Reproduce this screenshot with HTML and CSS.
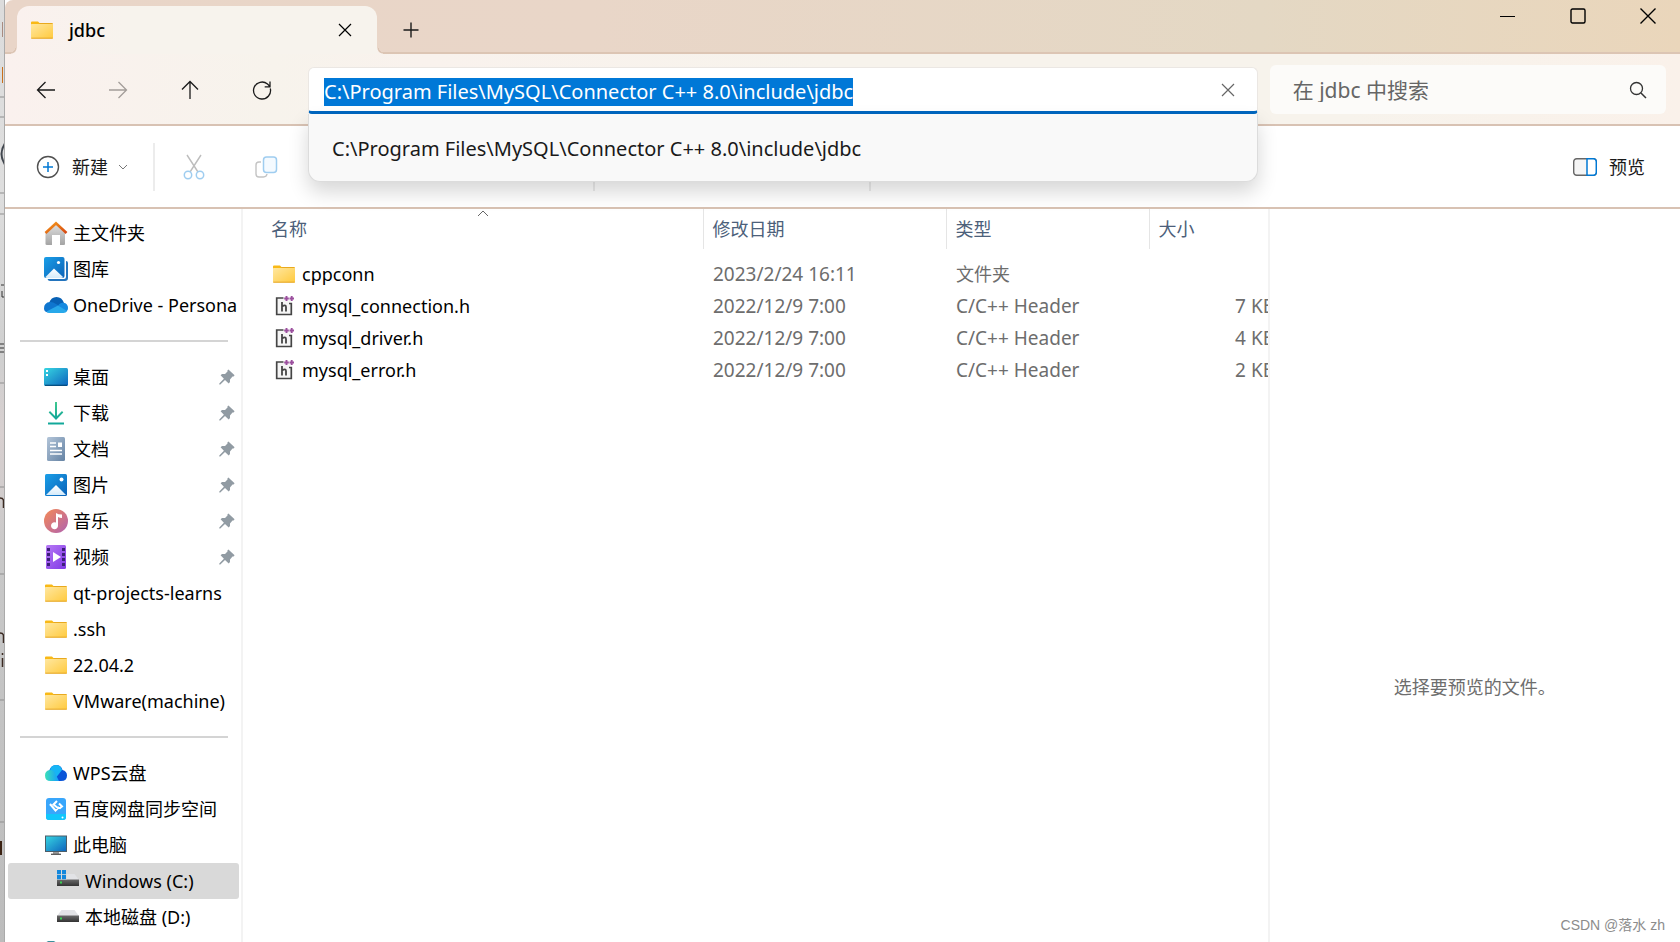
FILE: index.html
```html
<!DOCTYPE html>
<html lang="zh-CN">
<head>
<meta charset="utf-8">
<title>jdbc</title>
<link rel="stylesheet" href="styles.css">
</head>
<body>
<svg class="defs" width="0" height="0" aria-hidden="true">
  <defs>
    <linearGradient id="g-folder" x1="0" y1="0" x2="1" y2="1"><stop offset="0" stop-color="#ffe7a0"/><stop offset="1" stop-color="#ffca3e"/></linearGradient>
    <linearGradient id="g-blue" x1="0" y1="0" x2="1" y2="1"><stop offset="0" stop-color="#1a9fe8"/><stop offset="1" stop-color="#0b62b8"/></linearGradient>
    <linearGradient id="g-desk" x1="0" y1="0" x2="1" y2="1"><stop offset="0" stop-color="#37d6e2"/><stop offset="1" stop-color="#0d63bd"/></linearGradient>
    <linearGradient id="g-house" x1="0" y1="0" x2="0" y2="1"><stop offset="0" stop-color="#e0e0e0"/><stop offset="1" stop-color="#a4a4a4"/></linearGradient>
    <linearGradient id="g-roof" x1="0" y1="0" x2="1" y2="1"><stop offset="0" stop-color="#f59a1c"/><stop offset="1" stop-color="#d64510"/></linearGradient>
    <linearGradient id="g-down" x1="0" y1="0" x2="0" y2="1"><stop offset="0" stop-color="#3fc98f"/><stop offset="1" stop-color="#10a49a"/></linearGradient>
    <linearGradient id="g-doc" x1="0" y1="0" x2="1" y2="1"><stop offset="0" stop-color="#b3c5d9"/><stop offset="1" stop-color="#6482a3"/></linearGradient>
    <linearGradient id="g-music" x1="0" y1="0" x2="1" y2="1"><stop offset="0" stop-color="#f58a55"/><stop offset="1" stop-color="#b062b0"/></linearGradient>
    <linearGradient id="g-video" x1="0" y1="0" x2="1" y2="1"><stop offset="0" stop-color="#b77af5"/><stop offset="1" stop-color="#8038e6"/></linearGradient>
    <linearGradient id="g-wps" x1="0" y1="0" x2="1" y2="0"><stop offset="0" stop-color="#3be0b8"/><stop offset="1" stop-color="#139cff"/></linearGradient>
    <linearGradient id="g-hill" x1="0" y1="0" x2="0" y2="1"><stop offset="0" stop-color="#ffffff"/><stop offset="1" stop-color="#d5ebfa"/></linearGradient>
    <linearGradient id="g-drive" x1="0" y1="0" x2="0" y2="1"><stop offset="0" stop-color="#6a6a6a"/><stop offset="1" stop-color="#333333"/></linearGradient>
    <symbol id="i-folder" viewBox="0 0 24 24"><path d="M1 4.500Q1 3.500 2 3.500H8L9.500 5H22.500V9H1Z" fill="#f9b916"/><rect x="1" y="6" width="22" height="14.500" rx=".6" fill="url(#g-folder)"/><path d="M9.500 5.500H22.500" stroke="#e8a91f"/><path d="M1.300 20.200H22.700" stroke="#e5a525"/></symbol>
    <symbol id="i-header" viewBox="0 0 24 24"><path d="M5 4.500H18.500V20.500H5Z" fill="#f5f5f5"/><path d="M11.500 4H4.700V20.500H19.300V9.500H17" fill="none" stroke="#454545" stroke-width="1.700"/><path d="M10 8V17.500M10 12.500Q14 10 14 13V17.500" fill="none" stroke="#454545" stroke-width="1.800"/><path d="M14.500 2V7M12.200 4.500H16.800M19.700 2V7M17.500 4.500H22" stroke="#9b4f9e" stroke-width="1.900"/></symbol>
    <symbol id="i-pin" viewBox="0 0 16 16"><path d="M9.400.4L15.600 6.200 14.600 7.400 13.500 7.500 11 10.400V13L9.700 14.400 6 10.900 1.300 15.500H.3V14.500L4.900 9.700 1.600 6.300 3 5H6L8.500 2.400V1.300Z" fill="#919ba3"/></symbol>
    <symbol id="i-drive" viewBox="0 0 24 24"><path d="M5.500 5H18.500L23 11H1Z" fill="#e2e3e6"/><rect x="1" y="10.500" width="22" height="6.500" fill="url(#g-drive)"/><rect x="4" y="12.500" width="2" height="2" fill="#39d353"/></symbol>
    <symbol id="i-x" viewBox="0 0 14 14"><path d="M1 1L13 13M13 1L1 13" fill="none" stroke="currentColor" stroke-width="1.200"/></symbol>
  </defs>
</svg>

<div class="behind" aria-hidden="true">
  <svg width="4" height="942" viewBox="0 0 4 942">
    <path d="M0 97H5M0 117H5M0 193H5M0 214H5M0 383H5M0 487H5M0 574H5M0 700H5M0 822H5" stroke="#8f8f8f"/>
    <path d="M2.500 22V37" stroke="#a98b80"/>
    <path d="M2.500 67V83" stroke="#c96f1c"/>
    <path d="M6 142Q-3 154 6 166" fill="none" stroke="#40464e" stroke-width="2"/>
    <path d="M1 285H5M2 291V297H5M0 344H5M0 348H5M0 352H5" stroke="#333" fill="none"/>
    <path d="M0 498Q3.500 498 3.500 501V508M0 633Q3.500 633 3.500 636V643M2.500 658V667M2.500 653V655" fill="none" stroke="#3b2a22" stroke-width="1.500"/>
    <rect x="0" y="841" width="2" height="14" fill="#3b2213"/>
  </svg>
</div>
<main class="window">
  <header class="titlebar">
    <div class="tab">
      <svg class="icon"><use href="#i-folder"/></svg>
      <span class="tab-name">jdbc</span>
      <button class="plain" aria-label="关闭标签页"><svg width="14" height="14"><use href="#i-x"/></svg></button>
    </div>
    <button class="plain new-tab" aria-label="新标签页"><svg width="16" height="16" viewBox="0 0 16 16"><path d="M8 .5V15.500M.5 8H15.500" stroke="#1a1a1a" stroke-width="1.400"/></svg></button>
    <div class="caption">
      <button class="plain" aria-label="最小化"><svg width="16" height="16" viewBox="0 0 16 16"><path d="M0 8.500H15" stroke="#000"/></svg></button>
      <button class="plain" aria-label="最大化"><svg width="16" height="16" viewBox="0 0 16 16"><rect x="1" y="1" width="14" height="14" rx="1.500" fill="none" stroke="#000" stroke-width="1.400"/></svg></button>
      <button class="plain" aria-label="关闭"><svg width="16" height="16" viewBox="0 0 16 16"><path d="M.5 .5L15.500 15.500M15.500 .5L.5 15.500" stroke="#000" stroke-width="1.400"/></svg></button>
    </div>
  </header>

  <nav class="navbar" aria-label="导航">
    <div class="nav-buttons">
      <button class="plain" aria-label="后退"><svg width="20" height="20" viewBox="0 0 20 20"><path d="M19 10H1.500M9.500 2L1.500 10L9.500 18" fill="none" stroke="#1a1a1a" stroke-width="1.300"/></svg></button>
      <button class="plain" aria-label="前进" disabled><svg width="20" height="20" viewBox="0 0 20 20"><path d="M1 10H18.500M10.500 2L18.500 10L10.500 18" fill="none" stroke="#a39d99" stroke-width="1.300"/></svg></button>
      <button class="plain" aria-label="向上"><svg width="20" height="20" viewBox="0 0 20 20"><path d="M10 19V1.500M2 9.500L10 1.500L18 9.500" fill="none" stroke="#1a1a1a" stroke-width="1.300"/></svg></button>
      <button class="plain" aria-label="刷新"><svg width="20" height="20" viewBox="0 0 20 20"><path d="M18.300 8.500A8.500 8.500 0 1 1 15.500 4L18 6.500M18 1.500V6.800H12.700" fill="none" stroke="#1a1a1a" stroke-width="1.300"/></svg></button>
    </div>
    <div class="address">
      <input id="path" class="address-input" type="text" aria-label="地址" value="C:\Program Files\MySQL\Connector C++ 8.0\include\jdbc" spellcheck="false" autofocus>
      <button class="plain clear" aria-label="清除"><svg width="14" height="14"><use href="#i-x"/></svg></button>
      <div class="suggest"><a href="#path">C:\Program Files\MySQL\Connector C++ 8.0\include\jdbc</a></div>
    </div>
    <div class="search">
      <input class="search-input" type="search" aria-label="搜索" placeholder="在 jdbc 中搜索">
      <svg width="18" height="18" viewBox="0 0 18 18"><circle cx="7.500" cy="7.500" r="6" fill="none" stroke="#333" stroke-width="1.300"/><path d="M12 12L17 17" stroke="#333" stroke-width="1.500"/></svg>
    </div>
  </nav>

  <div class="toolbar">
    <button class="plain new"><svg width="24" height="24" viewBox="0 0 24 24"><circle cx="12" cy="12" r="10.500" fill="none" stroke="#505050" stroke-width="1.400"/><path d="M12 7V17M7 12H17" stroke="#0078d4" stroke-width="1.500"/></svg><span>新建</span><svg width="10" height="6" viewBox="0 0 10 6"><path d="M1 1L5 5L9 1" fill="none" stroke="#777"/></svg></button>
    <span class="rule rule-new"></span>
    <button class="plain cut" aria-label="剪切" disabled><svg width="24" height="26" viewBox="0 0 24 26"><path d="M5 1L16 18M19 1L8 18" fill="none" stroke="#bdbdbd" stroke-width="1.400"/><circle cx="6" cy="21" r="3.700" fill="none" stroke="#9fcdf0" stroke-width="1.500"/><circle cx="18" cy="21" r="3.700" fill="none" stroke="#9fcdf0" stroke-width="1.500"/></svg></button>
    <button class="plain copy" aria-label="复制" disabled><svg width="24" height="24" viewBox="0 0 24 24"><path d="M7 7H5Q2 7 2 10V19Q2 22 5 22H9.500Q12.500 22 13 19" fill="none" stroke="#c4c4c4" stroke-width="1.400"/><rect x="9.500" y="2" width="13" height="15.500" rx="3" fill="#f4faff" stroke="#9fcdf0" stroke-width="1.500"/></svg></button>
    <span class="rule rule-mid"></span>
    <span class="rule rule-end"></span>
    <button class="plain preview-toggle"><svg width="24" height="18" viewBox="0 0 24 18"><rect x=".7" y=".7" width="22.600" height="16.600" rx="3" fill="#f5f5f5" stroke="#666" stroke-width="1.400"/><path d="M14 .7H20.300Q23.300 .7 23.300 3.700V14.300Q23.300 17.300 20.300 17.300H14Z" fill="#fff" stroke="#0078d4" stroke-width="1.500"/></svg><span>预览</span></button>
  </div>

  <div class="content">
    <aside class="sidebar">
      <a href="#path" class="item"><svg class="icon" viewBox="0 0 24 24"><path d="M3 10L12 2.500L21 10V23Q21 24 20 24H16V14H8V24H3Q1.500 24 1.500 23V11Z" fill="url(#g-house)"/><path d="M1.500 12L12 2.300L22.500 12" fill="none" stroke="url(#g-roof)" stroke-width="2.600"/></svg><span>主文件夹</span></a>
      <a href="#path" class="item"><svg class="icon" viewBox="0 0 24 24"><path d="M22 4Q24 4 24 6V21Q24 24 21 24H6Q4 24 3.500 22H20Q22 22 22 20Z" fill="#2374bd"/><rect x="0" y="0" width="20.500" height="21" rx="2" fill="url(#g-blue)"/><path d="M1.500 20L10 11.500L19 20Q19 21 17 21H3Q1.500 21 1.500 20Z" fill="url(#g-hill)"/><circle cx="14.500" cy="5.500" r="1.600" fill="#fff"/></svg><span>图库</span></a>
      <a href="#path" class="item"><svg class="icon" viewBox="0 0 24 24"><path d="M5 10Q7 4 12.500 4Q18 4 20 10L15 14L8 11Z" fill="#0861b5"/><path d="M0 15.500Q0 9.500 6 9Q9 8.800 12 11L17 14L4 19.500Q0 19 0 15.500Z" fill="#0f76cf"/><path d="M14 13Q16 9.500 19.500 9.800Q24 10.500 24 15Q24 18 21 19Z" fill="#168ae0"/><path d="M2.500 18.500L14 12.500L23 18Q22 20 19.500 20H5.500Q3.500 20 2.500 18.500Z" fill="#28a8ea"/></svg><span>OneDrive - Persona</span></a>
      <hr>
      <a href="#path" class="item"><svg class="icon" viewBox="0 0 24 24"><rect x="0" y="3" width="24" height="18" rx="1.500" fill="url(#g-desk)"/><path d="M2 6H4M2 10H4" stroke="#fff" stroke-width="2"/><path d="M1 20.300H23" stroke="#064a7a" stroke-width="1.200"/></svg><span>桌面</span><svg class="pin"><use href="#i-pin"/></svg></a>
      <a href="#path" class="item"><svg class="icon" viewBox="0 0 24 24"><path d="M11 1H13V15L18 10L19.300 11.500L12 19L4.700 11.500L6 10L11 15Z" fill="url(#g-down)"/><path d="M4 22.500H20" stroke="#12a89a" stroke-width="2"/></svg><span>下载</span><svg class="pin"><use href="#i-pin"/></svg></a>
      <a href="#path" class="item"><svg class="icon" viewBox="0 0 24 24"><rect x="3" y="0" width="18" height="24" rx="1.500" fill="url(#g-doc)"/><path d="M6 6H12M6 9.500H12M6 13.500H18M6 17H18" stroke="#fff" stroke-width="1.400"/><rect x="14" y="5.500" width="4" height="4.500" fill="#fff"/></svg><span>文档</span><svg class="pin"><use href="#i-pin"/></svg></a>
      <a href="#path" class="item"><svg class="icon" viewBox="0 0 24 24"><rect x="1" y="1" width="22" height="22" rx="1.500" fill="url(#g-blue)"/><path d="M2 22L12 12L22 22Z" fill="url(#g-hill)"/><circle cx="17.500" cy="6.500" r="2" fill="#fff"/></svg><span>图片</span><svg class="pin"><use href="#i-pin"/></svg></a>
      <a href="#path" class="item"><svg class="icon" viewBox="0 0 24 24"><circle cx="12" cy="12" r="12" fill="url(#g-music)"/><path d="M12 4Q14 5.500 18 5.500V9Q15.500 9 14 8V16.500A3.500 3.500 0 1 1 12 13.600Z" fill="#fff"/></svg><span>音乐</span><svg class="pin"><use href="#i-pin"/></svg></a>
      <a href="#path" class="item"><svg class="icon" viewBox="0 0 24 24"><rect x="2" y="0" width="20" height="24" rx="1.500" fill="url(#g-video)"/><path d="M4.500 3V22M19.500 3V22" stroke="#3d1f78" stroke-width="3" stroke-dasharray="3 2"/><path d="M9 7L17 12L9 17Z" fill="#fff"/></svg><span>视频</span><svg class="pin"><use href="#i-pin"/></svg></a>
      <a href="#path" class="item"><svg class="icon"><use href="#i-folder"/></svg><span>qt-projects-learns</span></a>
      <a href="#path" class="item"><svg class="icon"><use href="#i-folder"/></svg><span>.ssh</span></a>
      <a href="#path" class="item"><svg class="icon"><use href="#i-folder"/></svg><span>22.04.2</span></a>
      <a href="#path" class="item"><svg class="icon"><use href="#i-folder"/></svg><span>VMware(machine)</span></a>
      <hr>
      <a href="#path" class="item"><svg class="icon" viewBox="0 0 24 24"><path d="M5 10Q7 4 12 4Q17 4 18.500 9Q23 10 23 14.500Q23 20 17 20H10Z" fill="#0a55d8"/><path d="M6 8Q8 4 12 4Q17 4 18 9L11 18Z" fill="#16b5f5"/><path d="M6 9Q10 9 11 12L15 20H6.500Q1 20 1 14.500Q1 9.500 6 9Z" fill="url(#g-wps)"/></svg><span>WPS云盘</span></a>
      <a href="#path" class="item"><svg class="icon" viewBox="0 0 24 24"><rect x="2" y="1" width="20" height="22" rx="3" fill="#39a6fb"/><path d="M2 17H22V20Q22 23 19 23H5Q2 23 2 20Z" fill="#12c6fb"/><path d="M13 4L9.500 7.500L14.500 11.500M6 7L11.500 13.500L15 10M15 6.500L18 9.500L15.500 11.500M6 7.500L9 10" fill="none" stroke="#fff" stroke-width="2"/><circle cx="18.500" cy="20.500" r="1" fill="#fff"/></svg><span>百度网盘同步空间</span></a>
      <a href="#path" class="item"><svg class="icon" viewBox="0 0 24 24"><rect x="1.500" y="3" width="21" height="15.500" fill="url(#g-desk)" stroke="#4c5d68"/><path d="M9 19H15V21H9Z" fill="#9a9a9a"/><path d="M7 21.300H17" stroke="#555" stroke-width="1.300"/></svg><span>此电脑</span></a>
      <a href="#path" class="item drive current"><svg class="icon" viewBox="0 0 24 24"><use href="#i-drive"/><path d="M0 0H10.500V10.500H0Z" fill="#d9d9d9"/><path d="M1 1H5V5.200H1ZM6 1H10V5.200H6ZM1 6H5V10.200H1ZM6 6H10V10.200H6Z" fill="#1387dc"/></svg><span>Windows (C:)</span></a>
      <a href="#path" class="item drive"><svg class="icon"><use href="#i-drive"/></svg><span>本地磁盘 (D:)</span></a>
      <a href="#path" class="item" aria-label="网络"><svg class="icon" viewBox="0 0 24 24"><circle cx="7" cy="7" r="7.500" fill="#3b8f9c"/></svg></a>
    </aside>

    <section class="files">
      <table>
        <colgroup><col class="c-name"><col class="c-date"><col class="c-type"><col class="c-size"></colgroup>
        <thead><tr><th scope="col"><svg class="sort" width="12" height="7" viewBox="0 0 12 7"><path d="M1 6L6 1L11 6" fill="none" stroke="#666"/></svg>名称</th><th scope="col">修改日期</th><th scope="col">类型</th><th scope="col">大小</th></tr></thead>
        <tbody>
          <tr><td><div class="name"><svg class="icon"><use href="#i-folder"/></svg>cppconn</div></td><td class="latin">2023/2/24 16:11</td><td>文件夹</td><td></td></tr>
          <tr><td><div class="name"><svg class="icon"><use href="#i-header"/></svg>mysql_connection.h</div></td><td class="latin">2022/12/9 7:00</td><td class="latin">C/C++ Header</td><td class="size">7 KB</td></tr>
          <tr><td><div class="name"><svg class="icon"><use href="#i-header"/></svg>mysql_driver.h</div></td><td class="latin">2022/12/9 7:00</td><td class="latin">C/C++ Header</td><td class="size">4 KB</td></tr>
          <tr><td><div class="name"><svg class="icon"><use href="#i-header"/></svg>mysql_error.h</div></td><td class="latin">2022/12/9 7:00</td><td class="latin">C/C++ Header</td><td class="size">2 KB</td></tr>
        </tbody>
      </table>
    </section>

    <section class="preview">
      <p class="hint">选择要预览的文件。</p>
      <p class="credit">CSDN @落水 zh</p>
    </section>
  </div>
</main>
<script src="script.js"></script>
</body>
</html>
```
FILE: script.js
```js
const path = document.getElementById("path");
path.focus();
path.select();
```
FILE: styles.css
```css
* { box-sizing: border-box; }

body {
  margin: 0;
  height: 100vh;
  display: flex;
  overflow: hidden;
  background: #fff;
  color: #000;
  font: 18px/24px "Noto Sans", "Noto Sans CJK SC", sans-serif;
}

.defs { position: absolute; }
svg { display: block; flex: none; }
a { color: inherit; text-decoration: none; }
button, input { font: inherit; color: inherit; }
.plain { border: 0; padding: 0; background: none; display: flex; align-items: center; justify-content: center; }
.icon { width: 24px; height: 24px; }

.behind {
  flex: none;
  width: 5px;
  overflow: hidden;
  background: linear-gradient(#dcdcdc, #dedede 20%, #cfcfcf 38%, #d8d0d0 46%, #c8c8c8 60%, #bcbcbc);
  border-right: 1px solid #aaa;
}

.window { flex: 1; min-width: 0; display: flex; flex-direction: column; }

.titlebar {
  height: 54px;
  flex: none;
  display: flex;
  background: linear-gradient(90deg, #e9d5c8, #e9d6c8 35%, #e4d8c4 75%, #ead6bb);
  border-bottom: 2px solid #dcc5b4;
  border-top-left-radius: 8px;
}
.tab {
  position: relative;
  width: 360px;
  height: 48px;
  margin: 6px 0 -2px 12px;
  padding: 0 25px 0 13px;
  display: flex;
  align-items: center;
  border-radius: 12px 12px 0 0;
  background: linear-gradient(90deg, #faf1ee, #f7f3ed 30%);
}
.tab::before, .tab::after { content: ""; position: absolute; bottom: 0; width: 6px; height: 6px; }
.tab::before { right: 100%; background: radial-gradient(circle at 0 0, transparent 4px, #dcc5b4 4px 5px, #faf1ee 6px); }
.tab::after { left: 100%; background: radial-gradient(circle at 100% 0, transparent 4px, #dcc5b4 4px 5px, #f8f2ed 6px); }
.tab-name { flex: 1; margin-left: 15px; font-weight: 500; }
.new-tab { width: 68px; margin-top: 8px; }
.caption { margin-left: auto; display: flex; align-items: flex-start; gap: 54px; padding: 8px 24px 0 0; }

.navbar {
  height: 72px;
  flex: none;
  display: grid;
  grid-template-columns: 303px minmax(0, 949fr) minmax(0, 408fr);
  align-items: start;
  padding-right: 14px;
  background: linear-gradient(90deg, #faf1ee, #f7f3ec 16%, #f9f2ed 25%, #f7f3ec 50%, #f7f3ec 80%, #faf1ea);
  border-bottom: 2px solid #d8c2b3;
}
.nav-buttons { height: 72px; padding-left: 31px; display: flex; gap: 52px; align-items: center; }
.address {
  position: relative;
  height: 47px;
  margin-top: 13px;
  display: flex;
  align-items: center;
  background: #fff;
  border: 1px solid #ebe7e3;
  border-bottom: 3px solid #0067c0;
  border-radius: 6px 6px 4px 4px;
}
.address-input { flex: 1; min-width: 0; border: 0; outline: 0; padding: 4px 0 0 15px; background: none; font-size: 20px; line-height: 28px; color: #1a1a1a; }
.address-input::selection { background: #0078d7; color: #fff; }
.clear { width: 57px; height: 40px; color: #666; }
.suggest {
  position: absolute;
  z-index: 2;
  top: 100%;
  left: -1px;
  right: -1px;
  margin-top: 3px;
  height: 68px;
  padding: 3px 0 0 23px;
  display: flex;
  align-items: center;
  background: #f9f9f9;
  border: 1px solid #dcdcdc;
  border-top: 0;
  border-radius: 0 0 12px 12px;
  box-shadow: 0 10px 20px rgba(0, 0, 0, .16);
  font-size: 20px;
  line-height: 28px;
  color: #1a1a1a;
}
.search {
  height: 49px;
  margin: 11px 0 0 12px;
  padding: 0 19px 0 23px;
  display: flex;
  align-items: center;
  background: #fcfbf9;
  border-radius: 6px;
}
.search-input { flex: 1; min-width: 0; border: 0; outline: 0; padding: 0; background: none; font-size: 21px; }
.search-input::placeholder { color: #666; }

.toolbar {
  height: 83px;
  flex: none;
  display: flex;
  align-items: center;
  padding: 0 35px 0 31px;
  border-bottom: 2px solid #d8c2b3;
}
.new { gap: 12px; color: #1a1a1a; }
.new svg:last-child { margin-left: -2px; }
.rule { width: 2px; height: 48px; background: #ececec; }
.rule-new { margin-left: 25px; }
.cut { margin-left: 27px; }
.copy { margin-left: 48px; }
.rule-mid { margin-left: 315px; }
.rule-end { margin-left: 274px; }
.preview-toggle { margin-left: auto; gap: 12px; color: #1a1a1a; }

.content { flex: 1; min-height: 0; display: flex; }
.sidebar { width: 238px; flex: none; overflow: hidden; border-right: 2px solid #f3f3f3; padding: 6px 2px 0 3px; }
.item { height: 36px; display: flex; align-items: center; padding: 0 4px 0 36px; border-radius: 3px; white-space: nowrap; }
.item span { margin-left: 5px; flex: 1; }
.drive { padding-left: 48px; }
.current { background: #d9d9d9; }
.pin { width: 16px; height: 16px; }
.sidebar hr { height: 2px; margin: 17px 11px 17px 12px; border: 0; background: #d4d4d4; }

.files { flex: 1026; min-width: 0; overflow: hidden; border-right: 2px solid #f3f3f3; }
table { width: 1050px; table-layout: fixed; border-collapse: collapse; }
.c-name { width: 460px; }
.c-date { width: 243px; }
.c-type { width: 203px; }
.c-size { width: 144px; }
th { position: relative; height: 40px; padding: 0 9px; border-right: 1px solid #e5e5e5; text-align: left; font-weight: 400; color: #4c607a; }
th:first-child { padding-left: 28px; }
td:first-child { padding-left: 29px; }
th:last-child { border-right: 0; }
.sort { position: absolute; top: 1px; left: 234px; }
td { height: 32px; padding: 0 10px; color: #6d6d6d; white-space: nowrap; }
tbody::before { content: ""; display: block; height: 9px; }
.name { display: flex; align-items: center; gap: 6px; color: #000; }
.latin, .size { font-size: 19px; }
td.size { text-align: right; padding-right: 18px; }

.preview { flex: 411; position: relative; display: flex; align-items: center; justify-content: center; }
.hint { margin: 222px 0 0; color: #6d6d6d; }
.credit { position: absolute; right: 15px; bottom: 6px; margin: 0; font: 14px/22px "Liberation Sans", "Noto Sans CJK SC", sans-serif; color: #8c8c8c; }
```
